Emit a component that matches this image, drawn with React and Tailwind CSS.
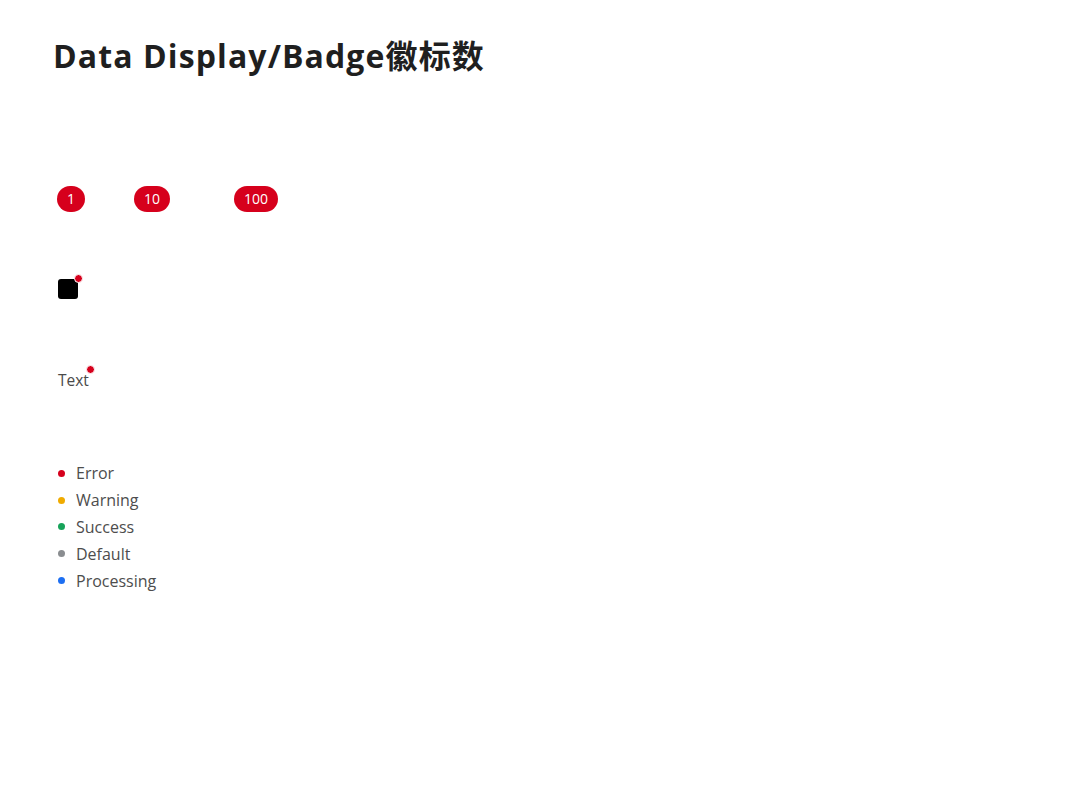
import React from 'react';

const statuses = [
  { label: 'Error', color: 'bg-[#d6001c]' },
  { label: 'Warning', color: 'bg-[#f0ab00]' },
  { label: 'Success', color: 'bg-[#17a35a]' },
  { label: 'Default', color: 'bg-[#8a8d90]' },
  { label: 'Processing', color: 'bg-[#1d6ff2]' },
];

const Count = ({ children, className = '' }) => (
  <span
    className={`inline-flex h-[26px] min-w-[26px] items-center justify-center rounded-full bg-[#d6001c] px-[10px] text-[14px] leading-none text-white ${className}`}
  >
    {children}
  </span>
);

const App = () => {
  return (
    <div className="min-h-[800px] bg-white pl-[53px] pt-[36px] text-[#1f1f1f] [font-family:'Open_Sans','Noto_Sans_CJK_SC',sans-serif]">
      <h1 className="text-[32px] font-bold leading-[40px] tracking-[1.1px]">Data Display/Badge徽标数</h1>

      {/* count badges */}
      <div className="mt-[110px] flex items-center pl-[4px]">
        <Count className="px-[9px]">1</Count>
        <Count className="ml-[49px]">10</Count>
        <Count className="ml-[64px]">100</Count>
      </div>

      {/* dot on a block */}
      <div className="mt-[67px] pl-[5px]">
        <span className="relative inline-block h-[20px] w-[20px] rounded-[3px] bg-black">
          <span className="absolute right-[-5px] top-[-5px] h-[9px] w-[9px] rounded-full border border-white bg-[#d6001c]" />
        </span>
      </div>

      {/* dot on text */}
      <div className="mt-[63px] pl-[5px]">
        <span className="relative inline-block text-[15.5px] leading-[20px] text-[#4a4a4a]">
          Text
          <span className="absolute right-[-6px] top-[-5px] h-[9px] w-[9px] rounded-full border border-white bg-[#d6001c]" />
        </span>
      </div>

      {/* status dots */}
      <ul className="mt-[68px] flex flex-col pl-[5px]">
        {statuses.map(s => (
          <li key={s.label} className="flex h-[26.8px] items-center text-[16px] text-[#4d4d4d]">
            <span className={`mr-[11px] h-[7px] w-[7px] rounded-full ${s.color}`} />
            {s.label}
          </li>
        ))}
      </ul>
    </div>
  );
};

export default App;
